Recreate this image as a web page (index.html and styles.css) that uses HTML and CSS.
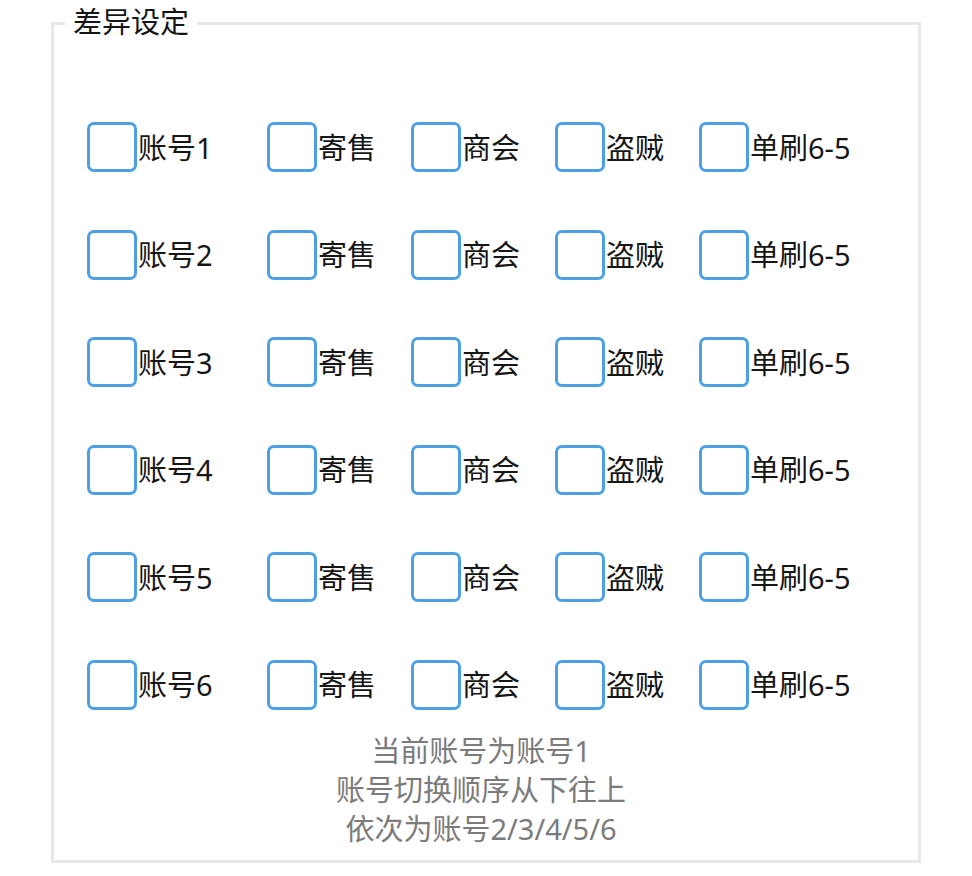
FILE: index.html
```html
<!DOCTYPE html>
<html lang="zh-CN">
<head>
<meta charset="utf-8">
<title>差异设定</title>
<link rel="stylesheet" href="styles.css">
</head>
<body>
<fieldset class="panel">
  <legend class="panel-title">差异设定</legend>
  <div class="grid">
    <label class="opt"><input type="checkbox" class="box"><span class="txt">账号1</span></label>
    <label class="opt"><input type="checkbox" class="box"><span class="txt">寄售</span></label>
    <label class="opt"><input type="checkbox" class="box"><span class="txt">商会</span></label>
    <label class="opt"><input type="checkbox" class="box"><span class="txt">盗贼</span></label>
    <label class="opt"><input type="checkbox" class="box"><span class="txt">单刷6-5</span></label>

    <label class="opt"><input type="checkbox" class="box"><span class="txt">账号2</span></label>
    <label class="opt"><input type="checkbox" class="box"><span class="txt">寄售</span></label>
    <label class="opt"><input type="checkbox" class="box"><span class="txt">商会</span></label>
    <label class="opt"><input type="checkbox" class="box"><span class="txt">盗贼</span></label>
    <label class="opt"><input type="checkbox" class="box"><span class="txt">单刷6-5</span></label>

    <label class="opt"><input type="checkbox" class="box"><span class="txt">账号3</span></label>
    <label class="opt"><input type="checkbox" class="box"><span class="txt">寄售</span></label>
    <label class="opt"><input type="checkbox" class="box"><span class="txt">商会</span></label>
    <label class="opt"><input type="checkbox" class="box"><span class="txt">盗贼</span></label>
    <label class="opt"><input type="checkbox" class="box"><span class="txt">单刷6-5</span></label>

    <label class="opt"><input type="checkbox" class="box"><span class="txt">账号4</span></label>
    <label class="opt"><input type="checkbox" class="box"><span class="txt">寄售</span></label>
    <label class="opt"><input type="checkbox" class="box"><span class="txt">商会</span></label>
    <label class="opt"><input type="checkbox" class="box"><span class="txt">盗贼</span></label>
    <label class="opt"><input type="checkbox" class="box"><span class="txt">单刷6-5</span></label>

    <label class="opt"><input type="checkbox" class="box"><span class="txt">账号5</span></label>
    <label class="opt"><input type="checkbox" class="box"><span class="txt">寄售</span></label>
    <label class="opt"><input type="checkbox" class="box"><span class="txt">商会</span></label>
    <label class="opt"><input type="checkbox" class="box"><span class="txt">盗贼</span></label>
    <label class="opt"><input type="checkbox" class="box"><span class="txt">单刷6-5</span></label>

    <label class="opt"><input type="checkbox" class="box"><span class="txt">账号6</span></label>
    <label class="opt"><input type="checkbox" class="box"><span class="txt">寄售</span></label>
    <label class="opt"><input type="checkbox" class="box"><span class="txt">商会</span></label>
    <label class="opt"><input type="checkbox" class="box"><span class="txt">盗贼</span></label>
    <label class="opt"><input type="checkbox" class="box"><span class="txt">单刷6-5</span></label>
  </div>
  <div class="note">
    <div>当前账号为账号1</div>
    <div>账号切换顺序从下往上</div>
    <div>依次为账号2/3/4/5/6</div>
  </div>
</fieldset>
</body>
</html>
```
FILE: styles.css
```css
html, body {
  margin: 0;
  padding: 0;
  background: #ffffff;
}

body {
  font-family: "Noto Sans", "Noto Sans CJK SC", sans-serif;
  color: #161616;
}

.panel {
  box-sizing: border-box;
  width: 870px;
  margin: 7px 0 0 51px;
  padding: 82px 0 12px 0;
  border: 3px solid #e8e8e8;
  min-inline-size: 0;
}

.panel-title {
  margin-left: 11px;
  padding: 0 8px 4px 8px;
  font-size: 29px;
  line-height: 29px;
  color: #161616;
}

.grid {
  display: grid;
  grid-template-columns: 180px 144px 144px 144px auto;
  grid-auto-rows: 50px;
  row-gap: 57.6px;
  margin-left: 33px;
}

.opt {
  display: flex;
  align-items: center;
}

.box {
  appearance: none;
  -webkit-appearance: none;
  box-sizing: border-box;
  width: 50px;
  height: 50px;
  margin: 0;
  border: 3px solid #4c9fe3;
  border-radius: 7px;
  background: #ffffff;
  flex: none;
}

.txt {
  font-size: 29px;
  line-height: 1;
  margin-left: 1px;
}

.note {
  margin-top: 21.5px;
  padding-right: 10px;
  text-align: center;
  font-size: 29px;
  line-height: 39px;
  color: #7b7b7b;
}
```
